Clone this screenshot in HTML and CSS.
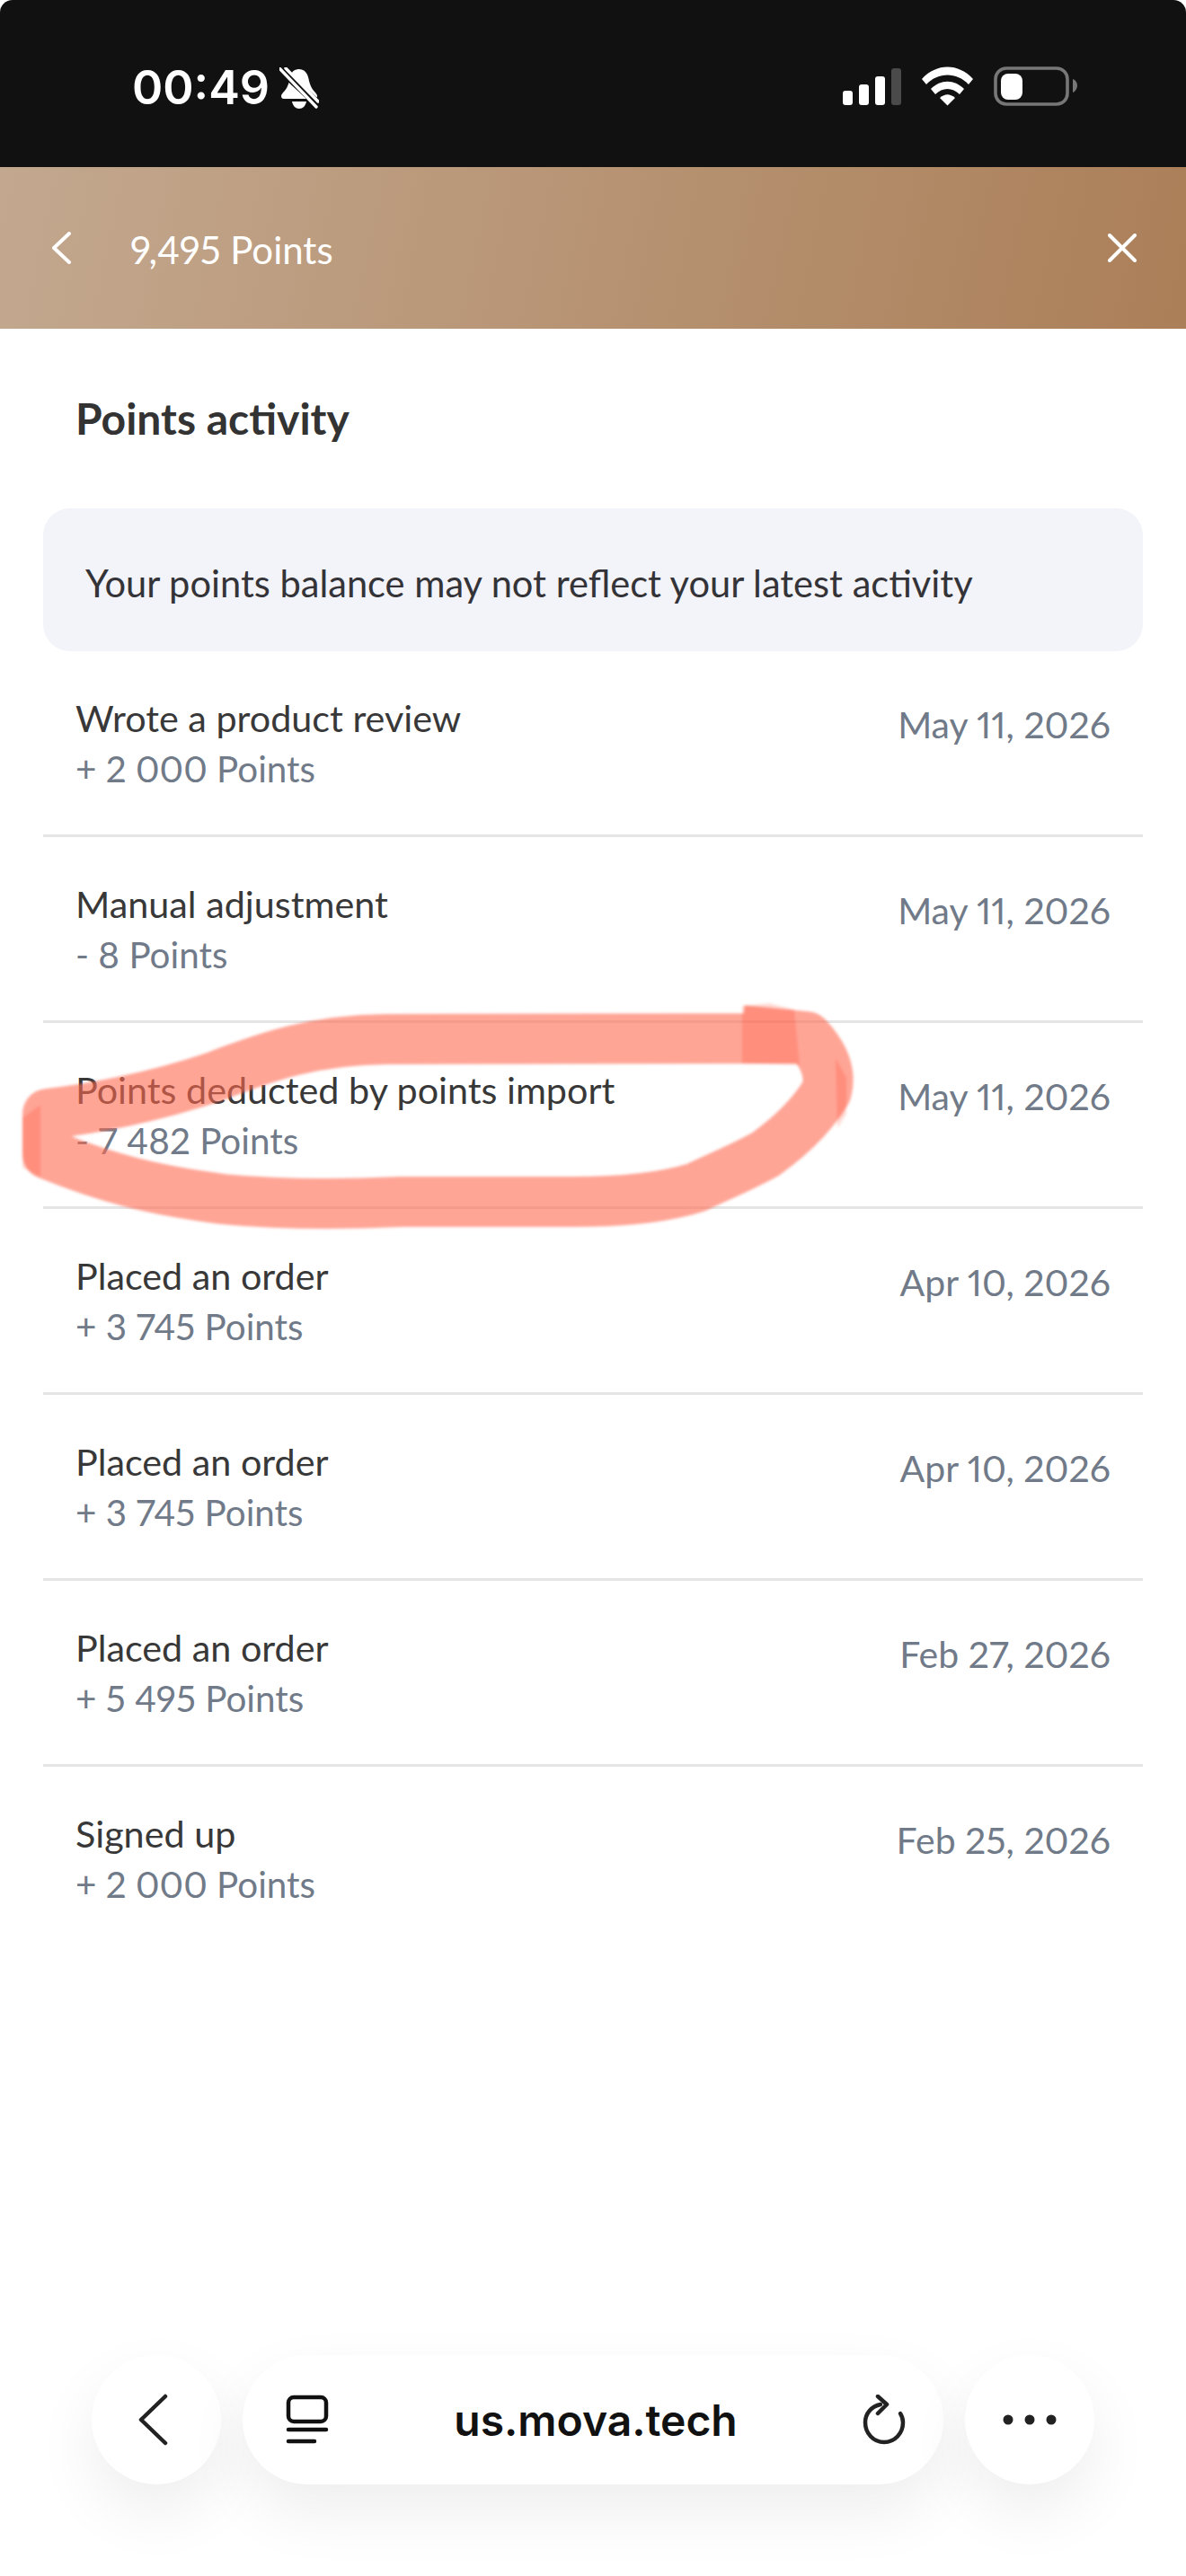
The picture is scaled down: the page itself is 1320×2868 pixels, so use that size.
FILE: index.html
```html
<!DOCTYPE html>
<html lang="en">
<head>
    <meta charset="UTF-8">
    <meta name="viewport" content="width=device-width, initial-scale=1.0">
    <title>Points activity</title>
    <link rel="stylesheet" href="styles.css">
</head>
<body>
    <div class="status-bar">
        <div class="status-left">
            <span class="clock">00:49</span>
            <svg class="bell" width="44" height="48" viewBox="0 0 44 48">
                <path d="M22 2c4 0 7 2 9 6 2 5 2 9 4 13 2 5 7 8 7 11 0 2-1 3-3 3H5c-2 0-3-1-3-3 0-3 5-6 7-11 2-4 2-8 4-13 1-4 5-6 9-6z" fill="#fff"/>
                <path d="M14 38c1 5 4 8 8 8s7-3 8-8z" fill="#fff"/>
                <path d="M2 3L43 41" stroke="#111" stroke-width="9"/>
                <path d="M1 2L42 45" stroke="#fff" stroke-width="3.4" stroke-linecap="round" transform="translate(-1 -1)"/>
                <path d="M7 1L43 38" stroke="#fff" stroke-width="3.4" stroke-linecap="round"/>
            </svg>
        </div>
        <div class="status-right">
            <svg width="66" height="42" viewBox="0 0 66 42">
                <rect x="0" y="25" width="11" height="16" rx="3" fill="#fff"/>
                <rect x="18" y="18" width="11" height="23" rx="3" fill="#fff"/>
                <rect x="36" y="9" width="11" height="32" rx="3" fill="#fff"/>
                <rect x="54" y="0" width="11" height="41" rx="3" fill="#4a4a4a"/>
            </svg>
            <svg width="58" height="44" viewBox="0 0 58 44">
                <path d="M0 14C16-4 41-4 57 14l-5 6C39 6 18 6 5 20z" fill="#fff"/>
                <path d="M10 25c11-11 26-11 37 0l-5 6c-8-8-19-8-27 0z" fill="#fff"/>
                <path d="M20 35c6-5 11-5 17 0l-8.500 8.500z" fill="#fff"/>
            </svg>
            <svg width="94" height="44" viewBox="0 0 94 44">
                <rect x="2" y="2" width="80" height="40" rx="12" fill="none" stroke="#777" stroke-width="3.600"/>
                <rect x="8" y="8" width="24" height="29" rx="8" fill="#fff"/>
                <path d="M88 14c3 1 5 4 5 7s-2 7-5 8z" fill="#777"/>
            </svg>
        </div>
    </div>

    <header class="top-bar">
        <div class="top-left">
            <svg width="24" height="36" viewBox="0 0 24 36">
                <path d="M21 2L4 18l17 16" fill="none" stroke="#fff" stroke-width="4" stroke-linecap="round" stroke-linejoin="round"/>
            </svg>
            <span class="top-title">9,495 Points</span>
        </div>
        <svg width="32" height="32" viewBox="0 0 32 32">
            <path d="M2 2l28 28M30 2L2 30" fill="none" stroke="#fff" stroke-width="4" stroke-linecap="round"/>
        </svg>
    </header>

    <main class="content">
        <h1 class="page-title">Points activity</h1>
        <div class="notice">Your points balance may not reflect your latest activity</div>

        <div class="activity-list">
            <div class="activity-row">
                <div>
                    <div class="activity-name">Wrote a product review</div>
                    <div class="activity-points">+ 2 000 Points</div>
                </div>
                <div class="activity-date">May 11, 2026</div>
            </div>
            <div class="activity-row">
                <div>
                    <div class="activity-name">Manual adjustment</div>
                    <div class="activity-points">- 8 Points</div>
                </div>
                <div class="activity-date">May 11, 2026</div>
            </div>
            <div class="activity-row">
                <div>
                    <div class="activity-name">Points deducted by points import</div>
                    <div class="activity-points">- 7 482 Points</div>
                </div>
                <div class="activity-date">May 11, 2026</div>
            </div>
            <div class="activity-row">
                <div>
                    <div class="activity-name">Placed an order</div>
                    <div class="activity-points">+ 3 745 Points</div>
                </div>
                <div class="activity-date">Apr 10, 2026</div>
            </div>
            <div class="activity-row">
                <div>
                    <div class="activity-name">Placed an order</div>
                    <div class="activity-points">+ 3 745 Points</div>
                </div>
                <div class="activity-date">Apr 10, 2026</div>
            </div>
            <div class="activity-row">
                <div>
                    <div class="activity-name">Placed an order</div>
                    <div class="activity-points">+ 5 495 Points</div>
                </div>
                <div class="activity-date">Feb 27, 2026</div>
            </div>
            <div class="activity-row">
                <div>
                    <div class="activity-name">Signed up</div>
                    <div class="activity-points">+ 2 000 Points</div>
                </div>
                <div class="activity-date">Feb 25, 2026</div>
            </div>
        </div>
    </main>

    <nav class="browser-bar">
        <div class="round-btn back-btn">
            <svg width="36" height="58" viewBox="0 0 36 58">
                <path d="M32 3L5 29l27 26" fill="none" stroke="#222" stroke-width="4.500" stroke-linecap="round" stroke-linejoin="round"/>
            </svg>
        </div>
        <div class="url-pill">
            <svg width="48" height="56" viewBox="0 0 48 56">
                <rect x="3" y="3" width="42" height="27" rx="6" fill="none" stroke="#111" stroke-width="4.500"/>
                <path d="M3 39h42M3 52h29" fill="none" stroke="#111" stroke-width="4.500" stroke-linecap="round"/>
            </svg>
            <span class="url">us.mova.tech</span>
            <svg width="48" height="56" viewBox="0 0 48 56">
                <path d="M20 11C10 13 3 21 3 31c0 12 9 22 21 22s21-10 21-22c0-4-1-7-3-10" fill="none" stroke="#222" stroke-width="4.500" stroke-linecap="round"/>
                <path d="M17 2l10 9-10 10" fill="none" stroke="#222" stroke-width="4.500" stroke-linecap="round" stroke-linejoin="round"/>
            </svg>
        </div>
        <div class="round-btn">
            <svg width="60" height="12" viewBox="0 0 60 12">
                <circle cx="6" cy="6" r="5.500" fill="#222"/>
                <circle cx="30" cy="6" r="5.500" fill="#222"/>
                <circle cx="54" cy="6" r="5.500" fill="#222"/>
            </svg>
        </div>
    </nav>

    <!-- hand drawn marker loop on top of the screenshot -->
    <svg class="marker" width="1320" height="2868" viewBox="0 0 1320 2868">
        <path class="marker-stroke" d="M886 1156L430 1157C350 1158 300 1175 238 1199C170 1222 100 1235 53 1240L53 1285C120 1312 170 1325 248 1335C320 1342 400 1340 446 1338L638 1338C680 1338 730 1336 775 1322C800 1310 825 1300 852 1285C880 1265 905 1240 920 1215C926 1192 915 1172 898 1154L826 1147"/>
        <path class="marker-overlap" d="M826 1120L856 1117L884 1124L890 1186L826 1184z"/>
        <path class="marker-overlap" d="M930 1178L942 1200L942 1240L932 1256z"/>
        <path class="marker-overlap" d="M25 1245L45 1230L45 1310L25 1300z"/>
    </svg>
</body>
</html>
```

FILE: styles.css
```css
* { box-sizing: border-box; }
html, body {
    margin: 0;
    height: 2868px;
    background: #fff;
}
body {
    display: flex;
    flex-direction: column;
    position: relative;
    overflow: hidden;
    font-family: Lato, "Open Sans", sans-serif;
    font-variant-numeric: proportional-nums;
}

.status-bar {
    height: 186px;
    background: #111;
    border-radius: 14px 14px 0 0;
    display: flex;
    justify-content: space-between;
    padding: 74px 120px 0 147px;
    color: #fff;
}
.status-left {
    display: flex;
    align-items: flex-start;
    gap: 14px;
}
.clock {
    font-family: Inter, sans-serif;
    font-weight: 600;
    font-size: 52px;
    line-height: 48px;
}
.bell { margin-top: 1px; margin-left: -3px; }
.status-right {
    display: flex;
    align-items: flex-start;
    gap: 22px;
    height: 44px;
}
.status-right svg:first-child { margin-top: 2px; }

.top-bar {
    height: 180px;
    background: linear-gradient(102deg, #c3a88f 0%, #ab7f58 100%);
    display: flex;
    align-items: center;
    justify-content: space-between;
    padding: 0 55px 0 56px;
    color: #fff;
}
.top-left {
    display: flex;
    align-items: center;
    gap: 65px;
}
.top-title {
    font-size: 42px;
    padding-top: 4px;
}

.content {
    flex: 1;
    padding: 0 48px;
    color: #333;
}
.page-title {
    margin: 0;
    padding: 70px 36px 0;
    font-size: 48px;
    line-height: 60px;
    font-weight: 700;
    color: #333;
}
.notice {
    margin-top: 70px;
    height: 159px;
    background: #f3f4f9;
    border-radius: 30px;
    padding: 6px 47px 0;
    display: flex;
    align-items: center;
    font-size: 41.6px;
    color: #333338;
}
.activity-row {
    height: 207px;
    padding: 46px 36px 0;
    display: flex;
    justify-content: space-between;
    align-items: flex-start;
    border-bottom: 3px solid #e5e5e5;
}
.activity-row:last-child { border-bottom: none; }
.activity-name {
    font-size: 41.3px;
    line-height: 57px;
    color: #383838;
}
.activity-points {
    font-size: 40.4px;
    line-height: 56px;
    color: #707a88;
}
.activity-date {
    font-size: 41px;
    line-height: 56px;
    padding-top: 8px;
    color: #707a88;
}

.browser-bar {
    display: flex;
    justify-content: center;
    gap: 24px;
    margin-bottom: 102px;
}
.round-btn, .url-pill {
    height: 144px;
    background: #fff;
    border-radius: 72px;
    box-shadow: 0 30px 70px rgba(0, 0, 0, 0.07);
    display: flex;
    align-items: center;
}
.round-btn {
    width: 144px;
    justify-content: center;
}
.back-btn svg { margin-right: 8px; }
.url-pill {
    width: 780px;
    padding: 0 42px 0 48px;
    justify-content: space-between;
}
.url {
    font-family: Inter, sans-serif;
    font-weight: 600;
    font-size: 48px;
    color: #111;
}

.marker {
    position: absolute;
    left: 0;
    top: 0;
    pointer-events: none;
    filter: blur(1.5px);
}
.marker-stroke {
    fill: none;
    stroke: rgba(255, 105, 80, 0.6);
    stroke-width: 56;
    stroke-linejoin: round;
    mix-blend-mode: multiply;
}
.marker-overlap {
    fill: rgba(255, 90, 60, 0.22);
    mix-blend-mode: multiply;
}
```
